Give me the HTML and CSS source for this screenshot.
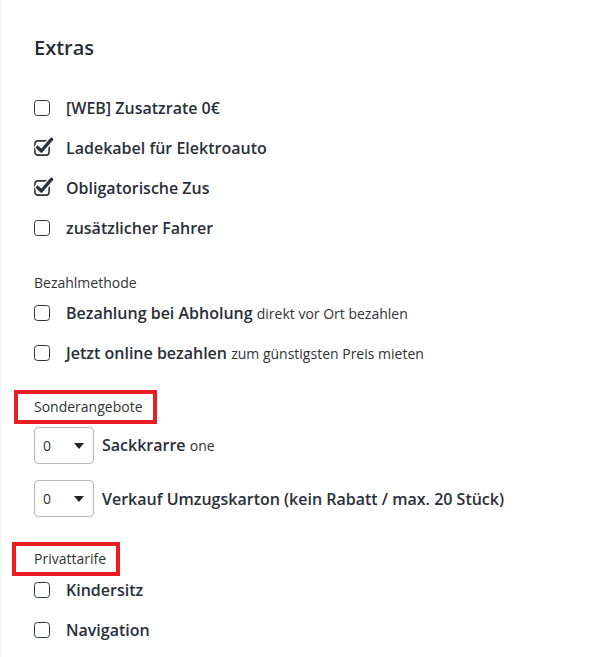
FILE: index.html
```html
<!DOCTYPE html>
<html lang="de">
<head>
<meta charset="utf-8">
<title>Extras</title>
<link rel="stylesheet" href="styles.css">
</head>
<body>
<div class="page">
  <h2 class="title">Extras</h2>

  <div class="group extras">
    <label class="opt"><span class="box"></span><span class="name">[WEB] Zusatzrate 0€</span></label>
    <label class="opt"><span class="box checked"><svg viewBox="0 0 22 22" width="22" height="22"><rect x="0.9" y="6.9" width="14.2" height="14.2" rx="3.2" fill="none" stroke="#2b3340" stroke-width="1.6"/><path d="M3.6 13.4 L7.4 17 L17.6 5.2" fill="none" stroke="#fff" stroke-width="6" stroke-linecap="round" stroke-linejoin="round"/><path d="M3.6 13.4 L7.4 17 L17.6 5.2" fill="none" stroke="#2b3340" stroke-width="3.4" stroke-linecap="round" stroke-linejoin="round"/></svg></span><span class="name">Ladekabel für Elektroauto</span></label>
    <label class="opt"><span class="box checked"><svg viewBox="0 0 22 22" width="22" height="22"><rect x="0.9" y="6.9" width="14.2" height="14.2" rx="3.2" fill="none" stroke="#2b3340" stroke-width="1.6"/><path d="M3.6 13.4 L7.4 17 L17.6 5.2" fill="none" stroke="#fff" stroke-width="6" stroke-linecap="round" stroke-linejoin="round"/><path d="M3.6 13.4 L7.4 17 L17.6 5.2" fill="none" stroke="#2b3340" stroke-width="3.4" stroke-linecap="round" stroke-linejoin="round"/></svg></span><span class="name">Obligatorische Zus</span></label>
    <label class="opt"><span class="box"></span><span class="name">zusätzlicher Fahrer</span></label>
  </div>

  <div class="section-label pay-label">Bezahlmethode</div>
  <div class="group pay">
    <label class="opt"><span class="box"></span><span class="name">Bezahlung bei Abholung <span class="hint">direkt vor Ort bezahlen</span></span></label>
    <label class="opt"><span class="box"></span><span class="name">Jetzt online bezahlen <span class="hint">zum günstigsten Preis mieten</span></span></label>
  </div>

  <div class="section-label marked marked-a">Sonderangebote</div>
  <div class="qty-group">
    <div class="qty-row">
      <div class="qty"><span class="qty-val">0</span><span class="caret"></span></div>
      <span class="name">Sackkrarre <span class="hint">one</span></span>
    </div>
    <div class="qty-row">
      <div class="qty"><span class="qty-val">0</span><span class="caret"></span></div>
      <span class="name">Verkauf Umzugskarton (kein Rabatt / max. 20 Stück)</span>
    </div>
  </div>

  <div class="section-label marked marked-b">Privattarife</div>
  <div class="group private">
    <label class="opt"><span class="box"></span><span class="name">Kindersitz</span></label>
    <label class="opt"><span class="box"></span><span class="name">Navigation</span></label>
  </div>
</div>
</body>
</html>
```

FILE: styles.css
```css
html, body {
  margin: 0;
  padding: 0;
  background: #ffffff;
}

body {
  font-family: "Open Sans", "Liberation Sans", sans-serif;
  color: #2b2f38;
  border-left: 2px solid #f6f6f6;
  min-height: 657px;
  box-sizing: border-box;
}

.page {
  padding: 34px 0 0 32px;
}

.title {
  margin: 0;
  font-size: 20px;
  line-height: 28px;
  font-weight: 600;
  color: #2a2c33;
}

.group {
  display: flex;
  flex-direction: column;
  gap: 12px;
}

.extras {
  margin-top: 32px;
}

.opt {
  display: flex;
  align-items: center;
  height: 28px;
}

.box {
  width: 16px;
  height: 16px;
  box-sizing: border-box;
  border: 1.6px solid #2b3340;
  border-radius: 3.5px;
  flex: none;
  margin-right: 16px;
}

.box.checked {
  border: none;
  position: relative;
}

.box.checked svg {
  position: absolute;
  left: 0;
  top: -6px;
  overflow: visible;
}

.name {
  font-size: 16px;
  line-height: 22px;
  font-weight: 600;
  color: #2b2f38;
  white-space: nowrap;
}

.hint {
  font-size: 14px;
  font-weight: 400;
  color: #333;
}

.section-label {
  font-size: 14px;
  line-height: 20px;
  color: #333;
}

.pay-label {
  margin-top: 31px;
}

.pay {
  margin-top: 6px;
}

.marked {
  display: inline-block;
  border: 4px solid #ec1c24;
  padding: 3px 10px 3px 16px;
}

.marked-a {
  margin-top: 23px;
  margin-left: -20px;
}

.marked-b {
  margin-top: 25px;
  margin-left: -22px;
  padding-left: 18px;
}

.qty-group {
  display: flex;
  flex-direction: column;
  gap: 16px;
  margin-top: 3px;
}

.qty-row {
  display: flex;
  align-items: center;
  gap: 8px;
}

.qty {
  width: 60px;
  height: 37px;
  box-sizing: border-box;
  border: 1px solid #b8b8b8;
  border-radius: 4px;
  display: flex;
  align-items: center;
  justify-content: space-between;
  padding: 0 9px 0 8px;
  flex: none;
}

.qty-val {
  font-size: 14px;
  color: #333;
}

.caret {
  width: 0;
  height: 0;
  border-left: 5px solid transparent;
  border-right: 5px solid transparent;
  border-top: 6px solid #222;
}

.private {
  margin-top: 0;
}
```
